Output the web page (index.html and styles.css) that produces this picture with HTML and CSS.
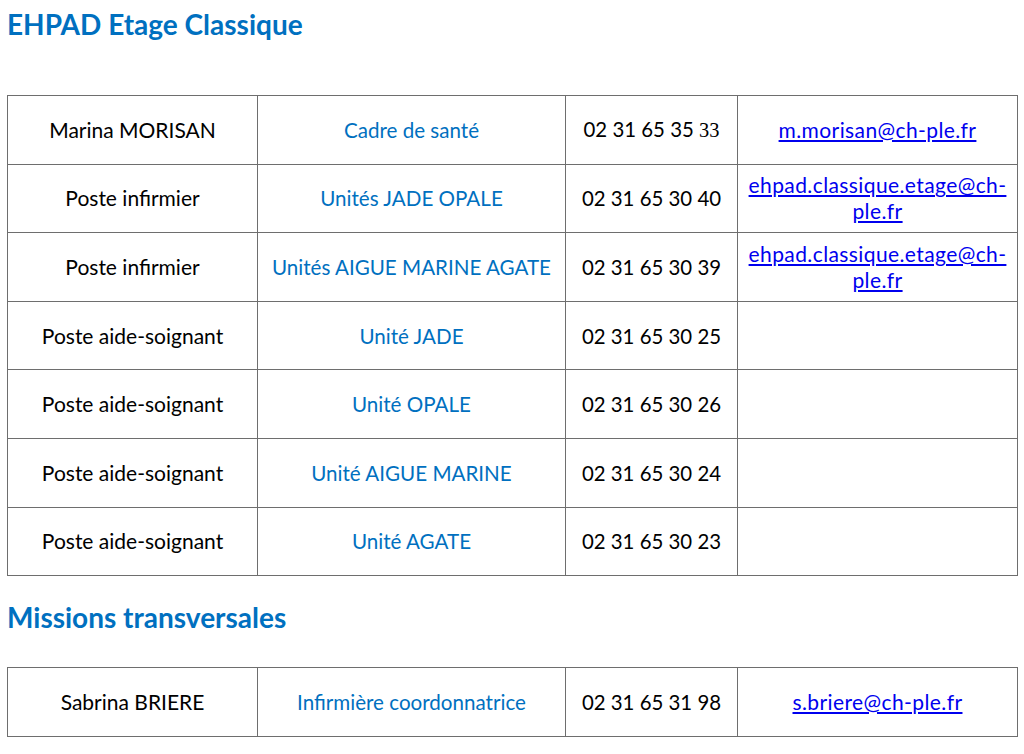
FILE: index.html
```html
<!DOCTYPE html>
<html lang="fr">
<head>
<meta charset="utf-8">
<link rel="stylesheet" href="styles.css">
</head>
<body>
<h1 class="title first">EHPAD Etage Classique</h1>
<table class="contacts">
<colgroup><col class="c1"><col class="c2"><col class="c3"><col class="c4"></colgroup>
<tr><td>Marina MORISAN</td><td class="role">Cadre de santé</td><td class="phone">02 31 65 35 <span class="serif">33</span></td><td><a href="#">m.morisan@ch-ple.fr</a></td></tr>
<tr><td>Poste infirmier</td><td class="role">Unités JADE OPALE</td><td class="phone">02 31 65 30 40</td><td><a href="#">ehpad.classique.etage@ch-<br>ple.fr</a></td></tr>
<tr><td>Poste infirmier</td><td class="role">Unités AIGUE MARINE AGATE</td><td class="phone">02 31 65 30 39</td><td><a href="#">ehpad.classique.etage@ch-<br>ple.fr</a></td></tr>
<tr><td>Poste aide-soignant</td><td class="role">Unité JADE</td><td class="phone">02 31 65 30 25</td><td></td></tr>
<tr><td>Poste aide-soignant</td><td class="role">Unité OPALE</td><td class="phone">02 31 65 30 26</td><td></td></tr>
<tr><td>Poste aide-soignant</td><td class="role">Unité AIGUE MARINE</td><td class="phone">02 31 65 30 24</td><td></td></tr>
<tr><td>Poste aide-soignant</td><td class="role">Unité AGATE</td><td class="phone">02 31 65 30 23</td><td></td></tr>
</table>
<h1 class="title second">Missions transversales</h1>
<table class="contacts">
<colgroup><col class="c1"><col class="c2"><col class="c3"><col class="c4"></colgroup>
<tr><td>Sabrina BRIERE</td><td class="role">Infirmière coordonnatrice</td><td class="phone">02 31 65 31 98</td><td><a href="#">s.briere@ch-ple.fr</a></td></tr>
</table>
</body>
</html>
```
FILE: styles.css
```css
html, body {
  margin: 0;
  padding: 0;
  background: #fff;
}
body {
  padding: 0 7px;
  font-family: "Lato", "Liberation Sans", sans-serif;
  color: #000;
}
.title {
  margin: 0;
  font-size: 28px;
  font-weight: bold;
  color: #0070c0;
  line-height: 32px;
}
.title.first {
  padding-top: 8px;
  margin-bottom: 55px;
}
.title.second {
  margin-top: 25px;
  margin-bottom: 34px;
}
.contacts {
  border-collapse: collapse;
  table-layout: fixed;
  width: 1010px;
  font-size: 21px;
}
.c1 { width: 250px; }
.c2 { width: 308px; }
.c3 { width: 172px; }
.c4 { width: 280px; }
.contacts td {
  border: 1px solid #6e6e6e;
  height: 67.6px;
  padding: 0 4px;
  text-align: center;
  vertical-align: middle;
  line-height: 26px;
}
.role {
  color: #0070c0;
  font-size: 20.6px;
}
.phone {
  font-size: 20.4px;
}
.contacts a {
  color: #0000ee;
  text-decoration: underline;
  letter-spacing: 0.4px;
}
.serif {
  font-family: "Liberation Serif", serif;
}
```
